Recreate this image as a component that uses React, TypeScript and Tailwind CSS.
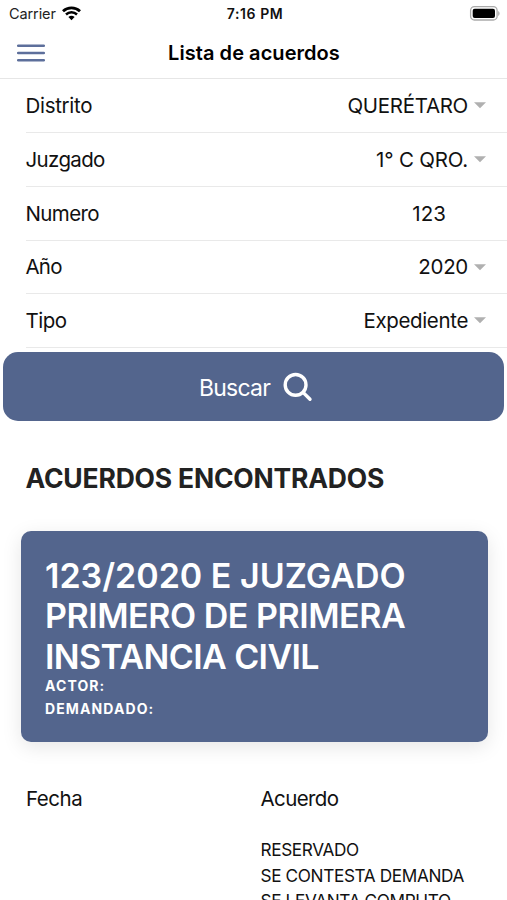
import clsx from "clsx";

interface IField {
  label: string;
  value: string;
  select: boolean;
  labelClass: string;
  valueClass: string;
  rowClass: string;
}

const fields: IField[] = [
  { label: "Distrito", value: "QUERÉTARO", select: true, labelClass: "pt-[2px] tracking-[-0.3px]", valueClass: "pt-[2px] tracking-[-0.3px]", rowClass: "h-[54px]" },
  { label: "Juzgado", value: "1° C QRO.", select: true, labelClass: "pt-[2px] tracking-[-0.65px]", valueClass: "pt-[2px] tracking-[-0.2px]", rowClass: "h-[54px]" },
  { label: "Numero", value: "123", select: false, labelClass: "pt-[2px] tracking-[-0.6px]", valueClass: "pt-[2px] tracking-[0.1px]", rowClass: "h-[54px]" },
  { label: "Año", value: "2020", select: true, labelClass: "tracking-[-0.8px]", valueClass: "tracking-[-0.3px]", rowClass: "h-[53px]" },
  { label: "Tipo", value: "Expediente", select: true, labelClass: "pt-[2px] tracking-[-0.5px]", valueClass: "pt-[2px] tracking-[-0.35px]", rowClass: "h-[54px]" },
];

const acuerdos = ["RESERVADO", "SE CONTESTA DEMANDA", "SE LEVANTA COMPUTO"];

const StatusBar = () => {
  return (
    <div className="grid grid-cols-3 items-center h-[27px] pl-[9px] pr-[7px]">
      <div className="flex items-center gap-[6px]">
        <span className="text-[14.5px] tracking-[-0.1px] text-[#222] pt-px">Carrier</span>
        <svg width="19" height="15" viewBox="0 0 19 15" fill="none" stroke="#000">
          <path d="M1 5.2a12.4 12.4 0 0 1 17 0" strokeWidth="2.8" />
          <path d="M4 8.5a8 8 0 0 1 11 0" strokeWidth="2.5" />
          <path d="M9.5 14.2 6.4 11.1a4.5 4.5 0 0 1 6.2 0z" fill="#000" stroke="none" />
        </svg>
      </div>
      <span className="text-center text-[14px] font-semibold tracking-[0.6px] -mr-px">7:16 PM</span>
      <svg className="justify-self-end" width="31" height="15" viewBox="0 0 31 15">
        <rect x="1.6" y="0.7" width="26.5" height="13.3" rx="3.8" fill="#fff" stroke="#aaa" strokeWidth="1.3" />
        <rect x="3.7" y="2.7" width="22.3" height="9.3" rx="2" fill="#000" />
        <path d="M29.2 5v5c1.8-.8 1.8-4.2 0-5z" fill="#aaa" />
      </svg>
    </div>
  );
};

const Header = () => {
  return (
    <header className="grid grid-cols-[60px_1fr_60px] items-center h-[52px] border-b border-[#e6e6e6]">
      <button type="button" aria-label="Menu" className="pl-[17px]">
        <svg width="28" height="18" viewBox="0 0 28 18" stroke="#5d6f9b" strokeWidth="2.5" strokeLinecap="round">
          <path d="M1.2 1.8h25.6M1.2 9h25.6M1.2 16.2h25.6" />
        </svg>
      </button>
      <h1 className="-mr-px text-center text-[20px] font-semibold tracking-[0.05px] text-black">Lista de acuerdos</h1>
    </header>
  );
};

const App = () => {
  return (
    <div className="h-[900px] overflow-hidden bg-white text-[#111] font-['Inter',sans-serif]">
      <StatusBar />
      <Header />
      <form>
        {fields.map((field) => (
          <div key={field.label} className={clsx("ml-[26px] flex items-center justify-between border-b border-[#e9e9e9] text-[20.5px]", field.rowClass)}>
            <label className={clsx("-ml-[0.5px]", field.labelClass)}>{field.label}</label>
            {field.select ? (
              <div className="flex items-center gap-[6px] pr-[21px]">
                <span className={field.valueClass}>{field.value}</span>
                <svg width="12" height="7" viewBox="0 0 12 7" fill="#b0b0b0">
                  <path d="M0 0.2h12L6 6.2z" />
                </svg>
              </div>
            ) : (
              <span className={clsx("pr-[61px]", field.valueClass)}>{field.value}</span>
            )}
          </div>
        ))}
        <button type="button" className="mx-[3px] mt-[4px] flex h-[69px] w-[501px] items-center justify-center gap-[13px] rounded-[15px] bg-[#53658d] pl-[5px] text-white">
          <span className="pt-[3px] text-[23px] tracking-[-0.75px]">Buscar</span>
          <svg width="30" height="30" viewBox="0 0 30 30" fill="none" stroke="#fff" strokeWidth="3.4" strokeLinecap="round">
            <circle cx="12.6" cy="12.9" r="10.4" />
            <path d="M20.3 20.6l6.7 6.7" />
          </svg>
        </button>
      </form>
      <h2 className="mt-[39px] ml-[25.5px] text-[26.5px] leading-[36px] font-bold tracking-[-0.2px] text-[#222]">ACUERDOS ENCONTRADOS</h2>
      <div className="ml-[20.5px] mt-[35px] h-[211px] w-[467px] rounded-[10px] bg-[#53658d] pl-[24.5px] pt-[25px] text-white shadow-[0_5px_20px_rgba(0,0,0,0.1)]">
        <div className="text-[34px] leading-[40.3px] font-semibold">
          <p>123/2020 E JUZGADO</p>
          <p className="tracking-[-0.46px]">PRIMERO DE PRIMERA</p>
          <p className="tracking-[-0.6px]">INSTANCIA CIVIL</p>
        </div>
        <div className="text-[14px] leading-[23px] font-bold tracking-[1.1px] -mt-[3px]">
          <p>ACTOR:</p>
          <p>DEMANDADO:</p>
        </div>
      </div>
      <div className="mt-[43px] ml-[26px] grid grid-cols-[234.5px_1fr]">
        <p className="text-[20.5px] leading-[28px] tracking-[-0.45px]">Fecha</p>
        <div>
          <p className="text-[20.5px] leading-[28px] tracking-[-0.6px]">Acuerdo</p>
          <div className="mt-[24px] text-[17.2px] leading-[25.5px] tracking-[-0.36px] whitespace-nowrap">
            {acuerdos.map((acuerdo) => (
              <p key={acuerdo}>{acuerdo}</p>
            ))}
          </div>
        </div>
      </div>
    </div>
  );
};

export default App;
